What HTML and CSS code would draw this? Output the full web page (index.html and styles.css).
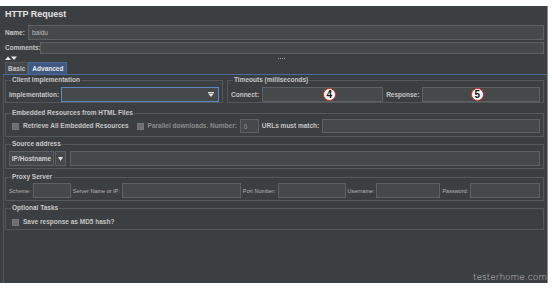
FILE: index.html
```html
<!DOCTYPE html>
<html>
<head>
<meta charset="utf-8">
<link rel="stylesheet" href="styles.css">
</head>
<body>
<div class="frame">
  <div class="title">HTTP Request</div>
  <div class="row name-row">
    <span class="lbl">Name:</span>
    <div class="field grow"><span class="val">baidu</span></div>
  </div>
  <div class="row comments-row">
    <span class="lbl">Comments:</span>
    <div class="field grow"></div>
  </div>
  <div class="splitter">
    <svg class="arrows" width="12" height="5" viewBox="0 0 12 5"><polygon points="0,4 3,0.5 6,4" fill="#e8e8e8"/><polygon points="6,0.5 12,0.5 9,4" fill="#e8e8e8"/></svg>
    <span class="handle"></span>
  </div>
  <div class="tabs">
    <span class="tab">Basic</span>
    <span class="tab active">Advanced</span>
  </div>
  <div class="pane">
    <div class="group-row">
      <fieldset class="group client">
        <legend>Client implementation</legend>
        <div class="line">
          <span class="lbl">Implementation:</span>
          <div class="field combo focus grow"><svg class="caret" width="6" height="5" viewBox="0 0 6 5"><rect x="0" y="0" width="6" height="1" fill="#ddd"/><polygon points="0,1.5 6,1.5 3,5" fill="#ddd"/></svg></div>
        </div>
      </fieldset>
      <fieldset class="group timeouts">
        <legend>Timeouts (milliseconds)</legend>
        <div class="line">
          <span class="lbl">Connect:</span>
          <div class="field connect"><span class="badge b4">4</span></div>
          <span class="lbl resp">Response:</span>
          <div class="field grow response"><span class="badge b5">5</span></div>
        </div>
      </fieldset>
    </div>
    <fieldset class="group embedded">
      <legend>Embedded Resources from HTML Files</legend>
      <div class="line">
        <span class="check"></span>
        <span class="lbl">Retrieve All Embedded Resources</span>
        <span class="check par"></span>
        <span class="lbl dim">Parallel downloads. Number:</span>
        <div class="field num"><span class="val dimv">6</span></div>
        <span class="lbl">URLs must match:</span>
        <div class="field grow"></div>
      </div>
    </fieldset>
    <fieldset class="group source">
      <legend>Source address</legend>
      <div class="line">
        <div class="field iphost"><span class="lbl">IP/Hostname</span></div>
        <div class="field ipbtn"><svg width="5" height="4" viewBox="0 0 5 4"><polygon points="0,0 5,0 2.5,4" fill="#ddd"/></svg></div>
        <div class="field grow srcin"></div>
      </div>
    </fieldset>
    <fieldset class="group proxy">
      <legend>Proxy Server</legend>
      <div class="line">
        <span class="sm">Scheme:</span>
        <div class="field scheme"></div>
        <span class="sm">Server Name or IP:</span>
        <div class="field server"></div>
        <span class="sm">Port Number:</span>
        <div class="field port"></div>
        <span class="sm">Username:</span>
        <div class="field user"></div>
        <span class="sm">Password:</span>
        <div class="field grow"></div>
      </div>
    </fieldset>
    <fieldset class="group optional">
      <legend>Optional Tasks</legend>
      <div class="line">
        <span class="check"></span>
        <span class="lbl">Save response as MD5 hash?</span>
      </div>
    </fieldset>
    <div class="watermark">testerhome.com</div>
  </div>
</div>
</body>
</html>
```

FILE: styles.css
```css
html, body {
  margin: 0;
  padding: 0;
  background: #ffffff;
}
body {
  width: 554px;
  height: 291px;
  overflow: hidden;
  font-family: "Liberation Sans", Arial, sans-serif;
}
.frame {
  margin-top: 6px;
  width: 548px;
  height: 277px;
  background: #3c3f41;
  border-right: 1px solid #8a8c8e;
  display: flex;
  flex-direction: column;
  color: #bbbbbb;
  box-sizing: border-box;
  position: relative;
}
.title {
  height: 19px;
  line-height: 17px;
  padding-left: 5px;
  font-size: 9px;
  font-weight: bold;
  color: #e2e2e2;
}
.row {
  display: flex;
  align-items: center;
  padding-left: 5px;
  padding-right: 3px;
}
.name-row { height: 15px; }
.comments-row { height: 12px; margin-top: 2px; }
.lbl {
  font-size: 6.5px;
  font-weight: bold;
  color: #c4c4c4;
  white-space: nowrap;
  line-height: 8px;
}
.field {
  background: #45494a;
  border: 1px solid #5d6163;
  box-sizing: border-box;
  height: 100%;
  display: flex;
  align-items: center;
}
.grow { flex: 1; }
.name-row .lbl { width: 23px; }
.comments-row .lbl { width: 35px; }
.val {
  font-size: 6.5px;
  color: #bdbdbd;
  padding-left: 3px;
}
.splitter {
  height: 6px;
  margin-top: 1px;
  display: flex;
  align-items: center;
  padding-left: 5px;
  position: relative;
}
.arrows { display: block; }
.handle {
  margin-left: 261px;
  width: 7px;
  height: 0;
  border-top: 1px dotted #9a9a9a;
}
.tabs {
  height: 12px;
  margin-top: 1px;
  display: flex;
  padding-left: 5px;
  align-items: flex-end;
}
.tab {
  height: 12px;
  line-height: 12px;
  padding: 0 2px;
  font-size: 6.5px;
  font-weight: bold;
  color: #c4c4c4;
  background: #45494a;
  border: 1px solid #55595b;
  border-bottom: none;
  box-sizing: border-box;
}
.tab.active {
  background: #3f5a82;
  color: #e8e8e8;
  padding: 0 3px;
  border-color: #4d6a96;
}
.pane {
  flex: 1;
  border-top: 1px solid #4a6b9c;
  border-left: 1px solid #56595b;
  margin-left: 3px;
  padding: 1px 3px 0 1px;
  position: relative;
}
.group {
  margin: 0;
  padding: 0 3px;
  border: 1px solid #54585a;
  min-width: 0;
}
.group legend {
  font-size: 6.5px;
  font-weight: bold;
  color: #c8c8c8;
  line-height: 8px;
  padding: 0 1px;
  margin-left: 2px;
}
.line {
  display: flex;
  align-items: center;
  gap: 3px;
}
.group-row {
  display: flex;
  gap: 4px;
}
.client { width: 218px; box-sizing: border-box; }
.timeouts { flex: 1; }
.client .line, .timeouts .line { height: 15px; margin-top: 3px; padding-bottom: 0; }
.client .line { gap: 2px; }
.combo {
  justify-content: flex-end;
  padding-right: 4px;
}
.focus { border-color: #5f87c2; }
.caret { display: block; }
.connect {
  width: 121px;
  justify-content: center;
  padding-left: 13px;
}
.resp { margin-left: 0; }
.response { justify-content: center; padding-right: 8px; }
.badge {
  width: 13px;
  height: 13px;
  border-radius: 50%;
  background: #ffffff;
  border: 1.5px solid #d42a1f;
  box-sizing: border-box;
  color: #111;
  font-size: 10px;
  font-weight: bold;
  display: flex;
  align-items: center;
  justify-content: center;
  line-height: 1;
}
.embedded { margin-top: 6px; }
.embedded .line { height: 14px; margin-top: 2px; margin-bottom: 3px; }
.check {
  width: 7px;
  height: 7px;
  background: #6b6d6f;
  border: 1px solid #747678;
  box-sizing: border-box;
  margin-left: 3px;
  margin-right: 1px;
  flex: none;
}
.check.par { margin-left: 5px; }
.dim { color: #8a8c8e; }
.dimv { color: #8a8c8e; }
.num { width: 19px; }
.source { margin-top: 3px; }
.source .line { height: 15px; margin-top: 3px; margin-bottom: 2px; gap: 1px; }
.iphost { width: 45px; justify-content: center; }
.iphost .lbl { color: #d0d0d0; }
.ipbtn { width: 11px; justify-content: center; }
.srcin { margin-left: 3px; }
.proxy { margin-top: 4px; }
.proxy .line { height: 15px; margin-top: 2px; margin-bottom: 2px; gap: 2px; }
.sm {
  font-size: 5.5px;
  color: #b4b4b4;
  white-space: nowrap;
}
.scheme { width: 38px; }
.server { width: 119px; }
.port { width: 68px; }
.user { width: 64px; }
.optional { margin-top: 3px; }
.optional .line { height: 12px; margin-top: 4px; margin-bottom: 1px; }
.watermark {
  position: absolute;
  right: 0;
  bottom: 1px;
  font-family: "DejaVu Sans", sans-serif;
  font-weight: 200;
  font-size: 9px;
  color: #c9c9c9;
  letter-spacing: 0;
}
```
